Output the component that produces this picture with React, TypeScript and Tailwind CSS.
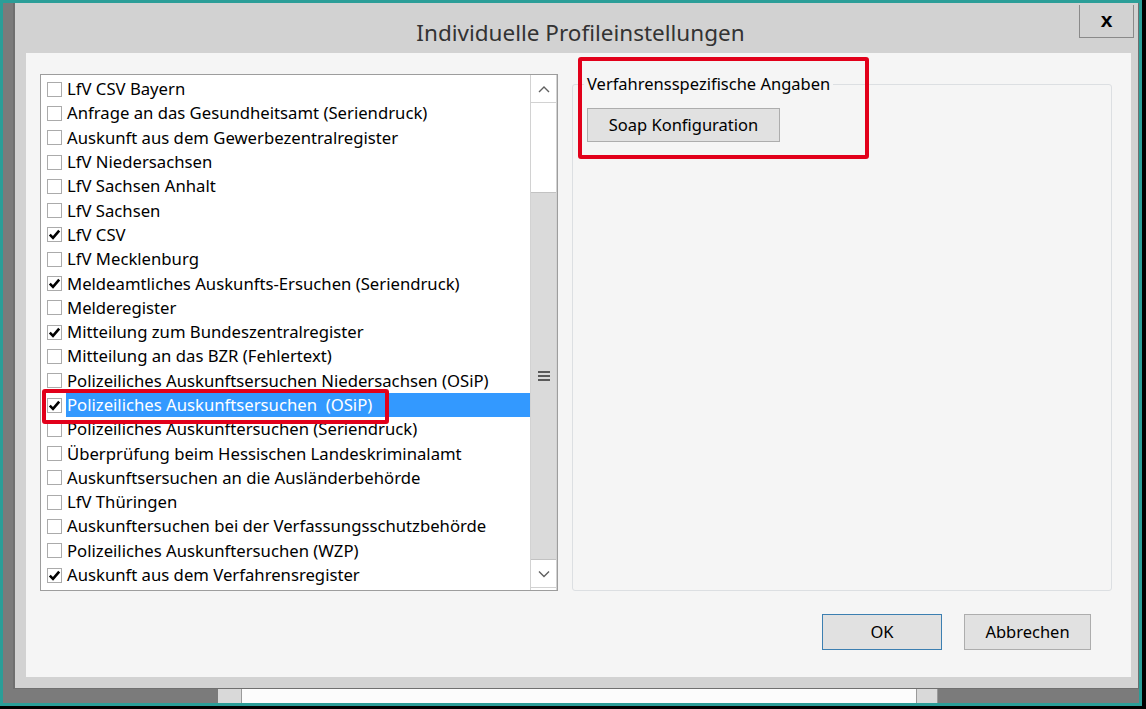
import React from 'react';

type Item = { label: string; checked: boolean };

const items: Item[] = [
  { label: 'LfV CSV Bayern', checked: false },
  { label: 'Anfrage an das Gesundheitsamt (Seriendruck)', checked: false },
  { label: 'Auskunft aus dem Gewerbezentralregister', checked: false },
  { label: 'LfV Niedersachsen', checked: false },
  { label: 'LfV Sachsen Anhalt', checked: false },
  { label: 'LfV Sachsen', checked: false },
  { label: 'LfV CSV', checked: true },
  { label: 'LfV Mecklenburg', checked: false },
  { label: 'Meldeamtliches Auskunfts-Ersuchen (Seriendruck)', checked: true },
  { label: 'Melderegister', checked: false },
  { label: 'Mitteilung zum Bundeszentralregister', checked: true },
  { label: 'Mitteilung an das BZR (Fehlertext)', checked: false },
  { label: 'Polizeiliches Auskunftsersuchen Niedersachsen (OSiP)', checked: false },
  { label: 'Polizeiliches Auskunftsersuchen\u00a0 (OSiP)', checked: true },
  { label: 'Polizeiliches Auskunftersuchen (Seriendruck)', checked: false },
  { label: 'Überprüfung beim Hessischen Landeskriminalamt', checked: false },
  { label: 'Auskunftsersuchen an die Ausländerbehörde', checked: false },
  { label: 'LfV Thüringen', checked: false },
  { label: 'Auskunftersuchen bei der Verfassungsschutzbehörde', checked: false },
  { label: 'Polizeiliches Auskunftersuchen (WZP)', checked: false },
  { label: 'Auskunft aus dem Verfahrensregister', checked: true },
];

const SELECTED = 13;

const CheckBox: React.FC<{ checked: boolean }> = ({ checked }) => (
  <span className="w-[15px] h-[15px] shrink-0 border border-[#ababab] bg-white flex items-center justify-center">
    {checked && (
      <svg width="13" height="13" viewBox="0 0 13 13">
        <path d="M1.8 6.6 L5 9.9 L11.2 2.6" fill="none" stroke="#000" strokeWidth="2.6" />
      </svg>
    )}
  </span>
);

// Schmale Pfeile der Bildlaufleiste
const Chevron: React.FC<{ up?: boolean }> = ({ up }) => (
  <svg width="12" height="8" viewBox="0 0 12 8">
    <path
      d={up ? 'M1 7 L6 2 L11 7' : 'M1 1.5 L6 6.5 L11 1.5'}
      fill="none"
      stroke="#606060"
      strokeWidth="1.4"
    />
  </svg>
);

const ListBox: React.FC = () => (
  <div className="w-[518px] h-[517px] shrink-0 border border-[#9d9d9d] bg-white flex">
    {/* Einträge */}
    <div className="flex-1 pt-[2px] flex flex-col text-[16.7px]">
      {items.map((item, i) => (
        <div key={item.label} className="h-[24.3px] flex items-center">
          <span className="ml-[6px] mr-[4px]">
            <CheckBox checked={item.checked} />
          </span>
          <span
            className={`flex-1 h-full flex items-center pl-[1px] whitespace-pre ${
              i === SELECTED ? 'bg-[#3399ff] text-white' : 'text-black'
            }`}
          >
            {item.label}
          </span>
        </div>
      ))}
    </div>

    {/* Bildlaufleiste */}
    <div className="w-[27px] flex flex-col border-x border-[#d2d2d2]">
      <div className="h-[28px] border-b border-[#d2d2d2] flex items-center justify-center">
        <Chevron up />
      </div>
      <div className="h-[89px]" />
      <div className="flex-1 bg-[#dadada] border-y border-[#c2c2c2] flex items-center justify-center">
        <svg width="12" height="10" viewBox="0 0 12 10">
          <rect x="0" y="0" width="12" height="2" fill="#5a5a5a" />
          <rect x="0" y="4" width="12" height="2" fill="#5a5a5a" />
          <rect x="0" y="8" width="12" height="2" fill="#5a5a5a" />
        </svg>
      </div>
      <div className="h-[28px] border-b border-[#d2d2d2] flex items-center justify-center">
        <Chevron />
      </div>
      <div className="h-[2px]" />
    </div>
  </div>
);

const App: React.FC = () => {
  return (
    <div className="relative w-[1146px] h-[709px] bg-black font-[family-name:'Segoe_UI','Noto_Sans',sans-serif] text-[16.5px] leading-[20px]">
      <div className="w-[1142px] h-[706px] border-[3px] border-[#2b9e98] bg-[#7b7b7b] flex flex-col">
        <div className="flex h-[686px]">
          <div className="w-[10px] shrink-0" />

          {/* Dialog */}
          <div className="flex-1 flex flex-col bg-[#d2d2d2] border-l-2 border-r border-b border-[#6f6f6f]">
            {/* Titelleiste */}
            <div className="h-[50px] flex items-start shrink-0">
              <div className="w-[59px]" />
              <div className="flex-1 text-center pt-[16px] pl-[8px] text-[22.5px] leading-[28px] text-[#333333]">
                Individuelle Profileinstellungen
              </div>
              <button className="mt-[2px] mr-[4px] w-[55px] h-[33px] border border-t-0 border-[#8a8a8a] flex items-center justify-center pb-[3px] font-['Liberation_Sans',sans-serif] font-bold text-[21px] text-black">
                x
              </button>
            </div>

            {/* Inhalt */}
            <div className="flex-1 ml-[11px] mr-[7px] mb-[11px] bg-[#f5f5f5] flex flex-col pl-[14px] pt-[21px]">
              <div className="flex items-start gap-[14px]">
                <ListBox />
                <fieldset className="w-[540px] h-[517px] border border-[#dcdfe2] rounded-[3px] px-[14px]">
                  <legend className="-ml-[3px] px-[3px] text-black leading-[20px]">
                    Verfahrensspezifische Angaben
                  </legend>
                  <button className="block mt-[14px] w-[193px] h-[34px] bg-[#e1e1e1] border border-[#adadad] text-black">
                    Soap Konfiguration
                  </button>
                </fieldset>
              </div>

              <div className="flex justify-end gap-[22px] mt-[23px] pr-[40px]">
                <button className="w-[120px] h-[36px] bg-[#e1e1e1] border border-[#3c7fb1] text-black">
                  OK
                </button>
                <button className="w-[127px] h-[36px] bg-[#e1e1e1] border border-[#adadad] text-black">
                  Abbrechen
                </button>
              </div>
            </div>
          </div>
        </div>

        {/* Fenster dahinter */}
        <div className="h-[14px] flex">
          <div className="w-[215px] bg-[#7b7b7b]" />
          <div className="w-[24px] bg-[#d9d9d9] border-r border-[#9a9a9a]" />
          <div className="w-[674px] bg-[#fcfcfc]" />
          <div className="w-[22px] bg-[#d9d9d9] border-x border-[#9a9a9a]" />
          <div className="flex-1 bg-[#7b7b7b]" />
        </div>
      </div>

      {/* Rote Markierungen */}
      <div className="absolute left-[578px] top-[57px] w-[291px] h-[102px] border-[4px] border-[#e2001a] rounded-[3px]" />
      <div className="absolute left-[42px] top-[389px] w-[347px] h-[35px] border-[4px] border-[#e2001a] rounded-[3px]" />
    </div>
  );
};

export default App;
